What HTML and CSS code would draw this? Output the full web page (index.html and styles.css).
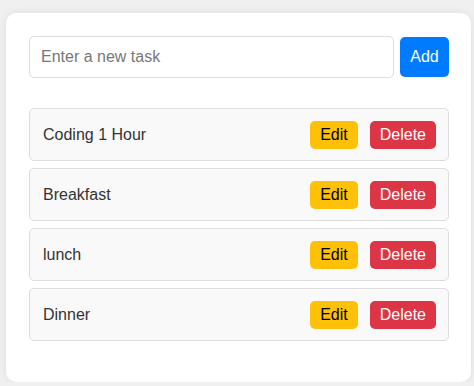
FILE: index.html
```html
<!DOCTYPE html>
<html lang="en">
<head>
    <meta charset="UTF-8">
    <meta name="viewport" content="width=device-width, initial-scale=1.0">
    <title>Todo List</title>
    <link rel="stylesheet" href="styles.css">
</head>
<body>
    <div class="container">
        <div class="add-row">
            <input type="text" id="task-input" placeholder="Enter a new task">
            <button class="add-btn">Add</button>
        </div>
        <ul class="task-list">
            <li class="task">
                <span class="task-text">Coding 1 Hour</span>
                <div class="actions">
                    <button class="edit-btn">Edit</button>
                    <button class="delete-btn">Delete</button>
                </div>
            </li>
            <li class="task">
                <span class="task-text">Breakfast</span>
                <div class="actions">
                    <button class="edit-btn">Edit</button>
                    <button class="delete-btn">Delete</button>
                </div>
            </li>
            <li class="task">
                <span class="task-text">lunch</span>
                <div class="actions">
                    <button class="edit-btn">Edit</button>
                    <button class="delete-btn">Delete</button>
                </div>
            </li>
            <li class="task">
                <span class="task-text">Dinner</span>
                <div class="actions">
                    <button class="edit-btn">Edit</button>
                    <button class="delete-btn">Delete</button>
                </div>
            </li>
        </ul>
    </div>
</body>
</html>
```

FILE: styles.css
```css
body {
    background-color: #f0f0f0;
    font-family: "Liberation Sans", Arial, sans-serif;
    margin: 0;
    padding: 13px 3px 0 6px;
}
.container {
    width: 420px;
    height: 323px;
    background-color: white;
    border-radius: 10px;
    box-shadow: 0 0 8px rgba(0,0,0,0.08);
    padding: 23px 22px 23px 23px;
}
.add-row {
    display: flex;
    align-items: center;
    gap: 6px;
}
#task-input {
    flex-grow: 1;
    height: 42px;
    box-sizing: border-box;
    padding: 10px 11px;
    font-family: inherit;
    font-size: 16px;
    color: #333;
    border: 1px solid #dcdcdc;
    border-radius: 5px;
    outline: none;
}
#task-input::placeholder {
    color: #777;
}
.add-btn {
    width: 49px;
    height: 40px;
    background-color: #007bff;
    color: white;
    font-family: inherit;
    font-size: 16px;
    border: none;
    border-radius: 5px;
    padding: 0;
}
.task-list {
    list-style: none;
    margin: 30px 0 0 0;
    padding: 0;
    display: flex;
    flex-direction: column;
    gap: 7px;
}
.task {
    display: flex;
    align-items: center;
    justify-content: space-between;
    height: 53px;
    box-sizing: border-box;
    padding: 0 12px 0 13px;
    background-color: #f9f9f9;
    border: 1px solid #dddddd;
    border-radius: 5px;
    color: #333;
    font-size: 16px;
}
.actions {
    display: flex;
    gap: 12px;
    margin-top: 1px;
}
.actions button {
    height: 28px;
    padding: 0 10px;
    font-family: inherit;
    font-size: 16px;
    border: none;
    border-radius: 5px;
}
.edit-btn {
    background-color: #ffc107;
    color: black;
}
.delete-btn {
    background-color: #dc3545;
    color: white;
}
```
